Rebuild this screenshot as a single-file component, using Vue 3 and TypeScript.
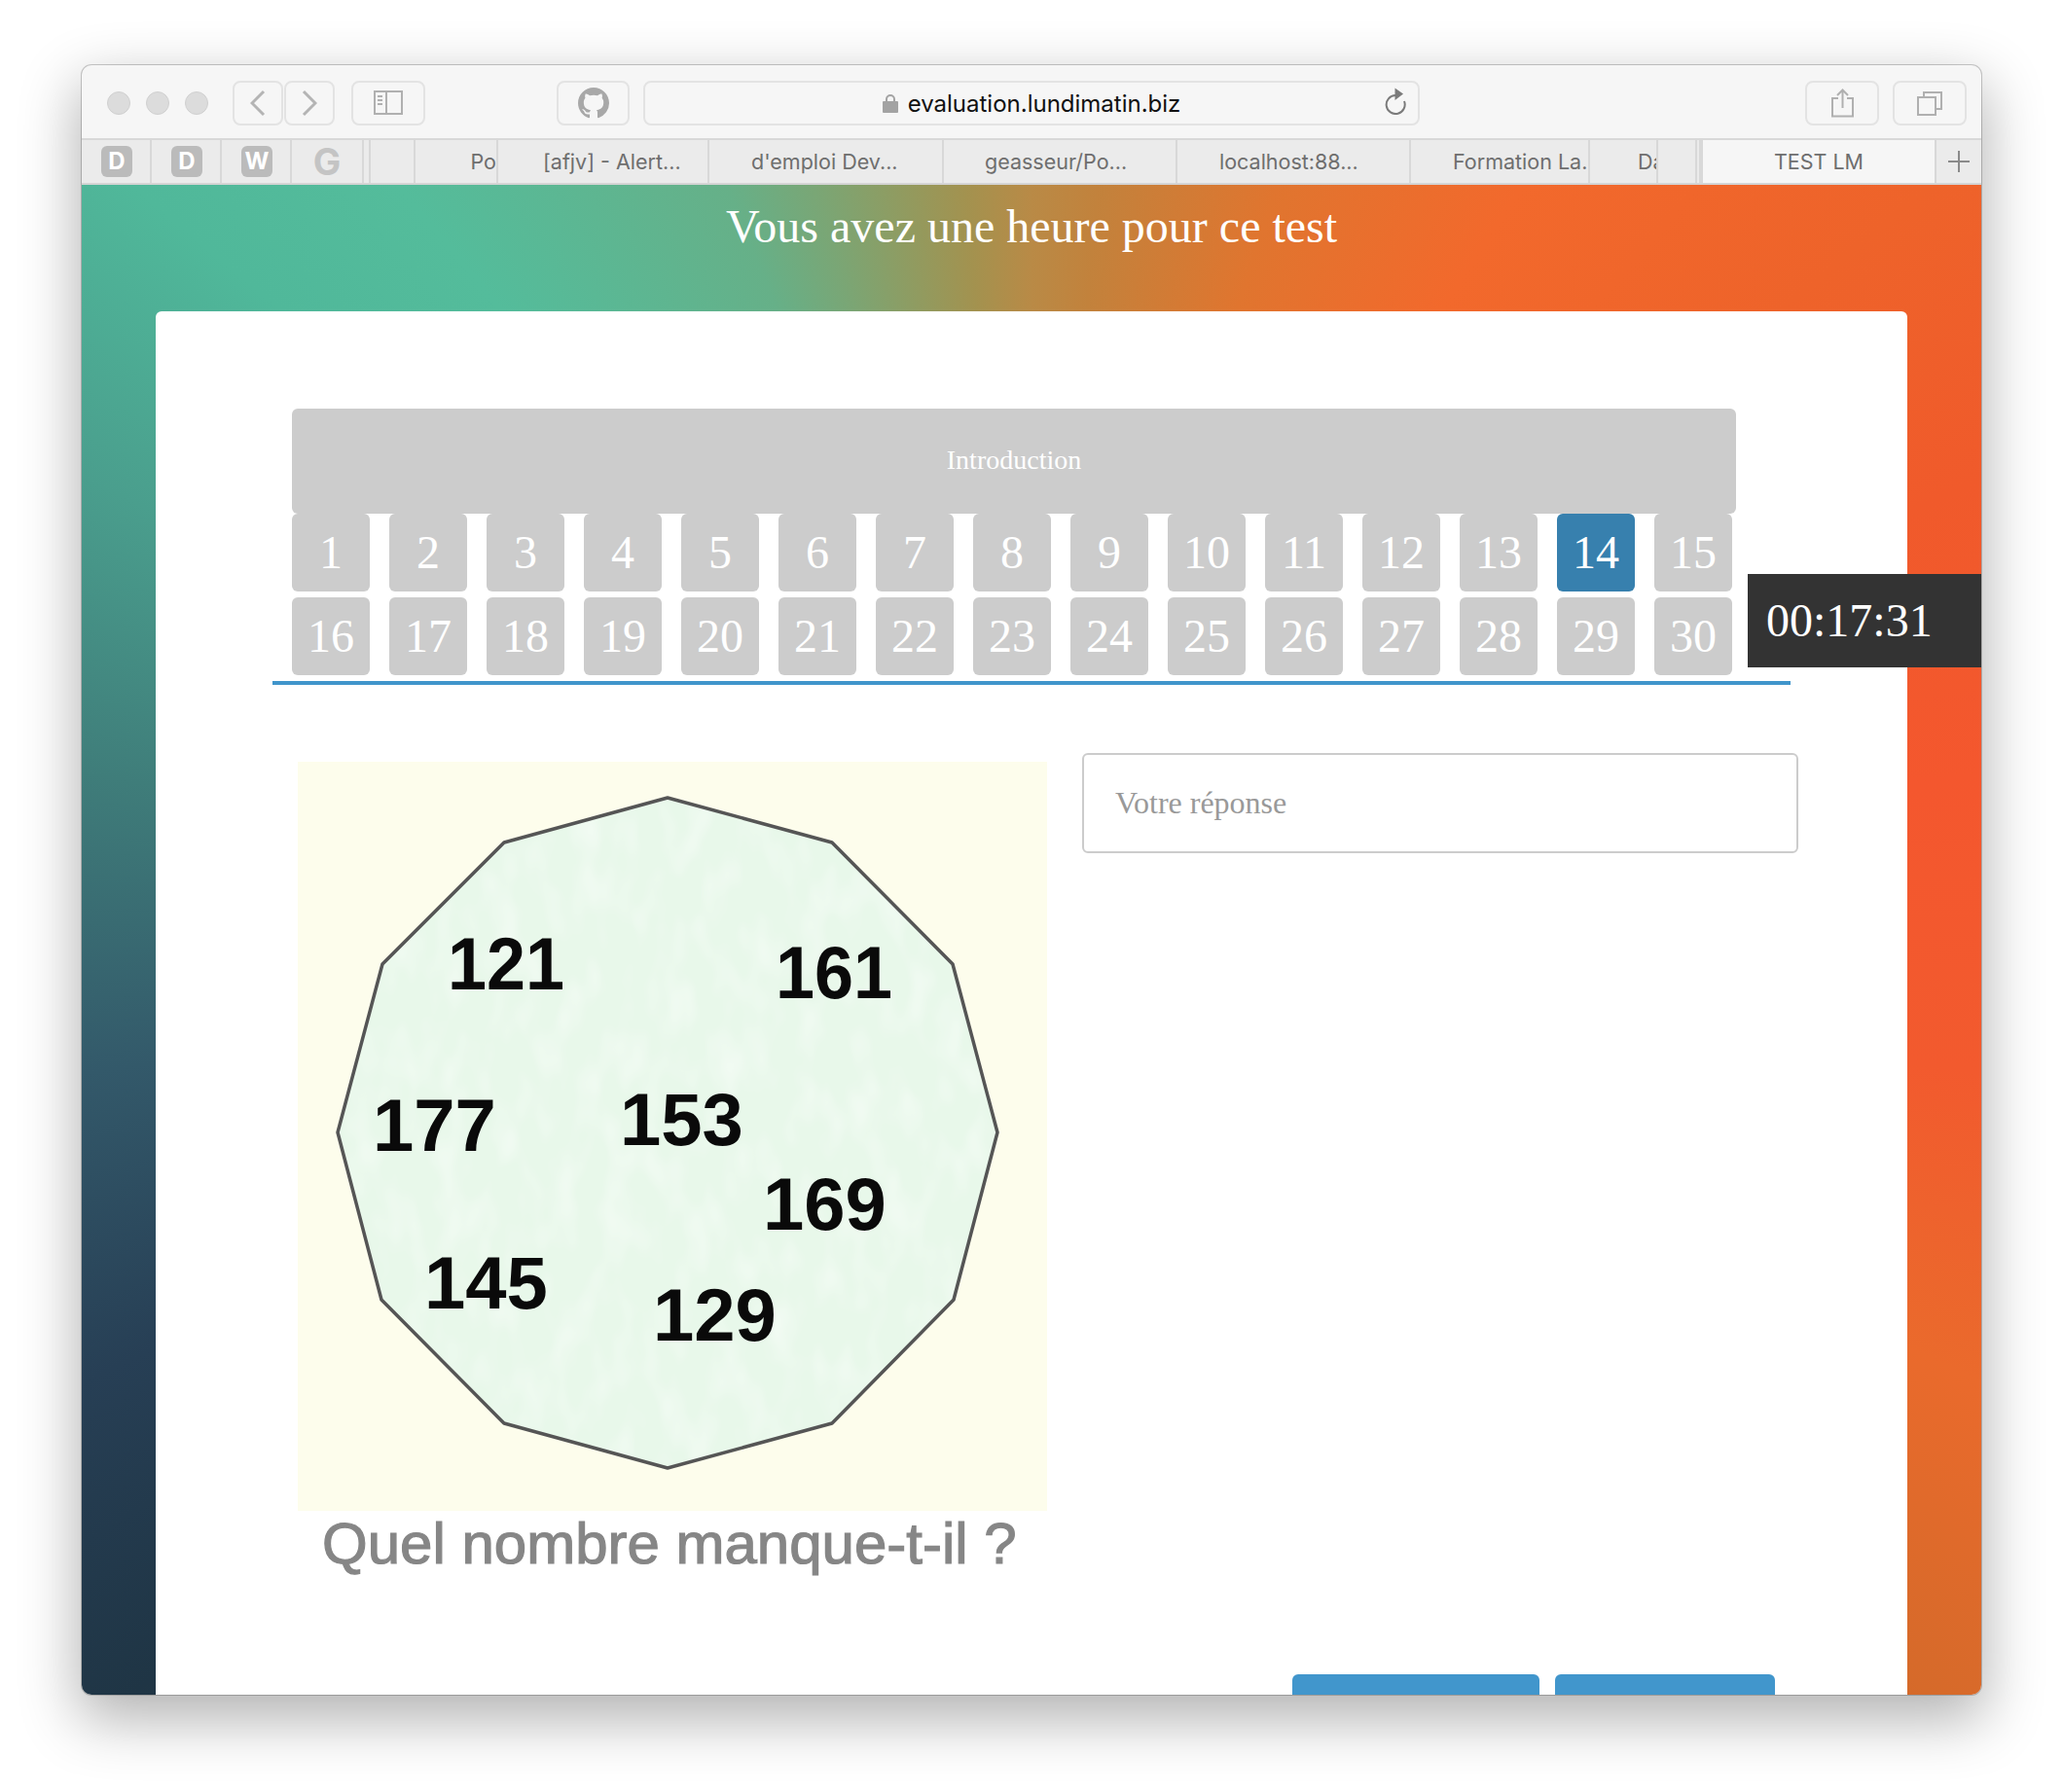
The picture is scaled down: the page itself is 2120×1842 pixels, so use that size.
<template>
  <div class="page">
    <div class="window">
      <div class="toolbar">
        <div class="dots">
          <span class="dot"></span>
          <span class="dot"></span>
          <span class="dot"></span>
        </div>
        <button class="tb-btn back">
          <svg width="16" height="28" viewBox="0 0 16 28"><path d="M14 2 2 14l12 12" class="ic-line" /></svg>
        </button>
        <button class="tb-btn forward">
          <svg width="16" height="28" viewBox="0 0 16 28"><path d="m2 2 12 12L2 26" class="ic-line" /></svg>
        </button>
        <button class="tb-btn sidebar">
          <svg width="30" height="25" viewBox="0 0 30 25">
            <rect x="1" y="1" width="28" height="23" class="ic-thin" />
            <path d="M13 1v23" class="ic-thin" />
            <path d="M4 6h5M4 10h5M4 14h5" class="ic-thin" />
          </svg>
        </button>
        <button class="tb-btn github">
          <svg width="32" height="32" viewBox="0 0 16 16">
            <path fill="#a8a8a8" d="M8 0C3.58 0 0 3.58 0 8c0 3.54 2.29 6.53 5.47 7.59.4.07.55-.17.55-.38 0-.19-.01-.82-.01-1.49-2.01.37-2.53-.49-2.69-.94-.09-.23-.48-.94-.82-1.13-.28-.15-.68-.52-.01-.53.63-.01 1.08.58 1.23.82.72 1.21 1.87.87 2.33.66.07-.52.28-.87.51-1.07-1.78-.2-3.64-.89-3.64-3.95 0-.87.31-1.59.82-2.15-.08-.2-.36-1.02.08-2.12 0 0 .67-.21 2.2.82.64-.18 1.32-.27 2-.27.68 0 1.36.09 2 .27 1.53-1.04 2.2-.82 2.2-.82.44 1.1.16 1.92.08 2.12.51.56.82 1.27.82 2.15 0 3.07-1.87 3.75-3.65 3.95.29.25.54.73.54 1.48 0 1.07-.01 1.93-.01 2.2 0 .21.15.46.55.38A8.013 8.013 0 0 0 16 8c0-4.42-3.58-8-8-8z" />
          </svg>
        </button>
        <div class="address">
          <svg class="lock" width="16" height="20" viewBox="0 0 16 20">
            <path d="M4 9V6a4 4 0 0 1 8 0v3" fill="none" stroke="#a3a3a3" stroke-width="2" />
            <rect y="8" width="16" height="12" rx="1" fill="#a3a3a3" />
          </svg>
          <span class="url">evaluation.lundimatin.biz</span>
          <svg class="reload" width="24" height="28" viewBox="0 0 24 28">
            <path d="M12 8A9.500 9.500 0 1 0 21 14" fill="none" stroke="#7a7a7a" stroke-width="2" />
            <path d="M11.500 0.500 20 6.500 11.500 13z" fill="#7a7a7a" />
          </svg>
        </div>
        <button class="tb-btn share">
          <svg width="24" height="30" viewBox="0 0 24 30">
            <path d="M8 10H2v18.500h21V10h-6" class="ic-thin" />
            <path d="M12.500 20V2M7 7l5.500-5.500L18 7" class="ic-thin" />
          </svg>
        </button>
        <button class="tb-btn tabs-btn">
          <svg width="26" height="26" viewBox="0 0 26 26">
            <path d="M7 7V2h18v17h-6" class="ic-thin" />
            <rect x="1" y="7" width="18" height="18" class="ic-thin" />
          </svg>
        </button>
      </div>

      <div class="tabs">
        <div
          v-for="tab in tabs"
          :key="tab.id"
          class="tab"
          :class="{ active: tab.active, right: tab.right, clip: tab.pad }"
          :style="{ width: tab.width + 'px', paddingLeft: tab.pad ? tab.pad + 'px' : undefined }"
        >
          <span v-if="tab.fav" class="fav">{{ tab.fav }}</span>
          <span v-else-if="tab.google" class="google">G</span>
          <span v-else-if="tab.plus" class="plus"></span>
          <span v-else-if="tab.label" class="tab-label">{{ tab.label }}</span>
        </div>
      </div>

      <main class="content">
        <h1 class="title">Vous avez une heure pour ce test</h1>
        <div class="timer">{{ timer }}</div>

        <div class="card">
          <div class="steps">
            <div class="step-intro">Introduction</div>
            <div class="step-grid">
              <div v-for="n in 30" :key="n" class="step" :class="{ current: n === current }">{{ n }}</div>
            </div>
          </div>
          <div class="rule"></div>

          <div class="question">
            <svg class="puzzle" width="770" height="840" viewBox="0 0 770 840">
              <defs>
                <clipPath id="shape"><polygon :points="polygon" /></clipPath>
                <filter id="mottle" x="0" y="0" width="100%" height="100%">
                  <feTurbulence type="fractalNoise" baseFrequency="0.035 0.018" numOctaves="2" seed="7" />
                  <feColorMatrix type="matrix" values="0 0 0 0 1  0 0 0 0 1  0 0 0 0 1  1.800 0 0 0 -0.750" />
                </filter>
              </defs>
              <rect width="770" height="770" fill="#fdfdec" />
              <g class="soft">
                <polygon :points="polygon" fill="#e8f8ea" />
                <rect width="770" height="770" filter="url(#mottle)" clip-path="url(#shape)" opacity="0.5" />
                <polygon :points="polygon" fill="none" stroke="#555" stroke-width="3.500" stroke-linejoin="round" />
                <text
                  v-for="v in values"
                  :key="v.text"
                  :x="v.x"
                  :y="v.y"
                  :textLength="v.len"
                  lengthAdjust="spacingAndGlyphs"
                  class="value"
                >{{ v.text }}</text>
              </g>
              <text x="25" y="824" class="caption">Quel nombre manque-t-il ?</text>
            </svg>
            <input class="answer" type="text" placeholder="Votre réponse" />
          </div>

          <div class="actions">
            <button class="action first"></button>
            <button class="action second"></button>
          </div>
        </div>
      </main>
    </div>
  </div>
</template>

<script setup lang="ts">
interface Tab {
  id: number
  width: number
  label?: string
  fav?: string
  google?: boolean
  plus?: boolean
  active?: boolean
  right?: boolean
  pad?: number
}

const timer = '00:17:31'
const current = 14

const tabs: Tab[] = [
  { id: 1, width: 72, fav: 'D' },
  { id: 2, width: 72, fav: 'D' },
  { id: 3, width: 72, fav: 'W' },
  { id: 4, width: 74, google: true },
  { id: 5, width: 7 },
  { id: 6, width: 46 },
  { id: 7, width: 85, label: 'Po', right: true },
  { id: 8, width: 217, label: '[afjv] - Alert...', pad: 46 },
  { id: 9, width: 241, label: "d'emploi Dev...", pad: 43 },
  { id: 10, width: 240, label: 'geasseur/Po...', pad: 42 },
  { id: 11, width: 240, label: 'localhost:88...', pad: 43 },
  { id: 12, width: 184, label: 'Formation La.', pad: 43 },
  { id: 13, width: 70, label: 'Da', pad: 49 },
  { id: 14, width: 40 },
  { id: 15, width: 4 },
  { id: 16, width: 242, label: 'TEST LM', active: true },
  { id: 17, width: 46, plus: true },
]

// corners of the dodecagon, inside the 770px picture
const polygon = [
  [380, 37], [549, 83], [673, 208], [719, 381], [674, 553], [549, 680],
  [380, 726], [212, 680], [86, 553], [41, 381], [87, 208], [212, 83],
].map((p) => p.join(',')).join(' ')

// 121 and 161 are a little narrower in the source picture
const values: { text: string; x: number; y: number; len?: number }[] = [
  { text: '121', x: 154, y: 234, len: 120 },
  { text: '161', x: 491, y: 243, len: 120 },
  { text: '177', x: 77, y: 400 },
  { text: '153', x: 331, y: 394 },
  { text: '169', x: 478, y: 481 },
  { text: '145', x: 130, y: 562 },
  { text: '129', x: 365, y: 595 },
]
</script>

<style scoped>
.page {
  width: 2120px;
  height: 1842px;
  padding: 67px 84px 100px;
  box-sizing: border-box;
  background: #fff;
}
.window {
  position: relative;
  width: 1952px;
  height: 1675px;
  display: flex;
  flex-direction: column;
  overflow: hidden;
  border-radius: 10px;
  background: #f6f6f6;
  box-shadow: 0 0 0 1px rgba(0, 0, 0, 0.2), 0 22px 60px 4px rgba(0, 0, 0, 0.3);
}

.toolbar {
  height: 77px;
  flex: none;
  display: flex;
  align-items: center;
  padding: 2px 15px 0 26px;
  box-sizing: border-box;
  border-bottom: 2px solid #d8d8d8;
}
.dots {
  display: flex;
  gap: 16px;
  margin-right: 25px;
}
.dot {
  width: 24px;
  height: 24px;
  box-sizing: border-box;
  border-radius: 50%;
  background: #dcdcdc;
  border: 1px solid #d0d0d0;
}
.tb-btn {
  height: 46px;
  padding: 0;
  display: flex;
  align-items: center;
  justify-content: center;
  box-sizing: border-box;
  background: #f6f6f6;
  border: 2px solid #e3e3e3;
  border-radius: 8px;
}
.back { width: 52px; }
.forward { width: 52px; margin-left: 1px; }
.sidebar { width: 76px; margin-left: 17px; }
.github { width: 75px; margin-left: 135px; }
.share { width: 76px; margin-left: auto; }
.tabs-btn { width: 76px; margin-left: 14px; }
.ic-line {
  fill: none;
  stroke: #b4b4b4;
  stroke-width: 3;
}
.ic-thin {
  fill: none;
  stroke: #b0b0b0;
  stroke-width: 2;
}
.address {
  position: relative;
  width: 798px;
  height: 46px;
  margin-left: 14px;
  display: flex;
  align-items: center;
  justify-content: center;
  box-sizing: border-box;
  border: 2px solid #e3e3e3;
  border-radius: 8px;
  background: #f6f6f6;
}
.lock {
  margin-right: 10px;
}
.url {
  padding-top: 2px;
  font-family: Inter, "Liberation Sans", sans-serif;
  font-size: 24px;
  color: #111;
}
.reload {
  position: absolute;
  right: 11px;
  top: 5px;
}

.tabs {
  height: 46px;
  flex: none;
  display: flex;
  box-sizing: border-box;
  background: #ebebeb;
  border-bottom: 2px solid #d4d4d4;
}
.tab {
  flex: none;
  display: flex;
  align-items: center;
  justify-content: center;
  box-sizing: border-box;
  overflow: hidden;
  border-right: 2px solid #d8d8d8;
  font-family: Inter, "Liberation Sans", sans-serif;
  font-size: 21.500px;
  color: #6e6e6e;
  white-space: nowrap;
}
.tab:last-child {
  border-right: 0;
}
.tab.active {
  background: #f6f6f6;
  border-left: 2px solid #d8d8d8;
}
.tab.right {
  justify-content: flex-end;
}
.tab.clip {
  justify-content: flex-start;
}
.fav {
  width: 32px;
  height: 32px;
  margin-left: 2px;
  border-radius: 6px;
  background: #bbb;
  color: #fff;
  font-size: 24px;
  font-weight: 700;
  line-height: 32px;
  text-align: center;
}
.google {
  font-size: 38px;
  font-weight: 700;
  color: #c4c4c4;
  line-height: 1;
}
.plus {
  position: relative;
  width: 22px;
  height: 22px;
}
.plus::before,
.plus::after {
  content: '';
  position: absolute;
  background: #8a8a8a;
}
.plus::before {
  left: 0;
  right: 0;
  top: 10px;
  height: 2px;
}
.plus::after {
  top: 0;
  bottom: 0;
  left: 10px;
  width: 2px;
}

.content {
  position: relative;
  flex: 1;
  padding: 0 76px;
  overflow: hidden;
  background: conic-gradient(
    from 0deg at 50% 50%,
    #b98a46 0deg,
    #c2823c 5deg,
    #e0752f 18deg,
    #f2692c 33deg,
    #ee632a 50deg,
    #f05a2b 64deg,
    #f4572e 80deg,
    #f25a2e 98deg,
    #ea6a2c 115deg,
    #d66a2a 130deg,
    #1f3545 230deg,
    #273f55 245deg,
    #33596a 262deg,
    #3f7d7a 280deg,
    #4a9e8d 296deg,
    #50b89a 310deg,
    #54bc9b 320deg,
    #66b088 338deg,
    #7aa675 344deg,
    #a3924f 355deg,
    #b98a46 360deg
  );
}
.title {
  height: 130px;
  margin: 0;
  padding-top: 8px;
  box-sizing: border-box;
  font-family: "Liberation Serif", serif;
  font-size: 48px;
  font-weight: 400;
  line-height: 70px;
  color: #fff;
  text-align: center;
}
.timer {
  position: absolute;
  top: 400px;
  right: 0;
  width: 240px;
  height: 96px;
  padding-left: 19px;
  box-sizing: border-box;
  background: #333;
  color: #fff;
  font-family: "Liberation Serif", serif;
  font-size: 48px;
  line-height: 96px;
}

.card {
  height: 1600px;
  padding: 100px 0 0 140px;
  box-sizing: border-box;
  background: #fff;
  border-radius: 6px;
  font-family: "Liberation Serif", serif;
}
.steps {
  width: 1484px;
}
.step-intro {
  height: 108px;
  border-radius: 6px;
  background: #ccc;
  color: #fff;
  font-size: 28px;
  line-height: 106px;
  text-align: center;
}
.step-grid {
  display: grid;
  grid-template-columns: repeat(15, 80px);
  column-gap: 20px;
  row-gap: 6px;
}
.step {
  height: 80px;
  border-radius: 6px;
  background: #ccc;
  color: #fff;
  font-size: 48px;
  line-height: 80px;
  text-align: center;
}
.step.current {
  background: #3780ae;
}
.rule {
  width: 1560px;
  height: 4px;
  margin: 6px 0 0 -20px;
  background: #4095cb;
}

.question {
  display: flex;
  align-items: flex-start;
  margin-top: 70px;
}
.puzzle {
  flex: none;
  margin: 9px 0 0 6px;
}
.soft {
  filter: blur(0.7px);
}
.value {
  font-family: "Liberation Sans", sans-serif;
  font-size: 76px;
  font-weight: 700;
  fill: #0a0a0a;
}
.caption {
  font-family: "Liberation Sans", sans-serif;
  font-size: 60px;
  fill: #868686;
  stroke: #868686;
  stroke-width: 1.200px;
}
.answer {
  width: 736px;
  height: 103px;
  margin-left: 36px;
  padding: 0 32px;
  box-sizing: border-box;
  background: #fff;
  border: 2px solid #ccc;
  border-radius: 6px;
  outline: none;
  font-family: "Liberation Serif", serif;
  font-size: 32px;
}
.answer::placeholder {
  color: #999;
  opacity: 1;
}

.actions {
  display: flex;
  gap: 16px;
  margin: 98px 0 0 1028px;
}
.action {
  height: 80px;
  padding: 0;
  border: 0;
  border-radius: 6px;
  background: #4196cc;
}
.first { width: 254px; }
.second { width: 226px; }
</style>
